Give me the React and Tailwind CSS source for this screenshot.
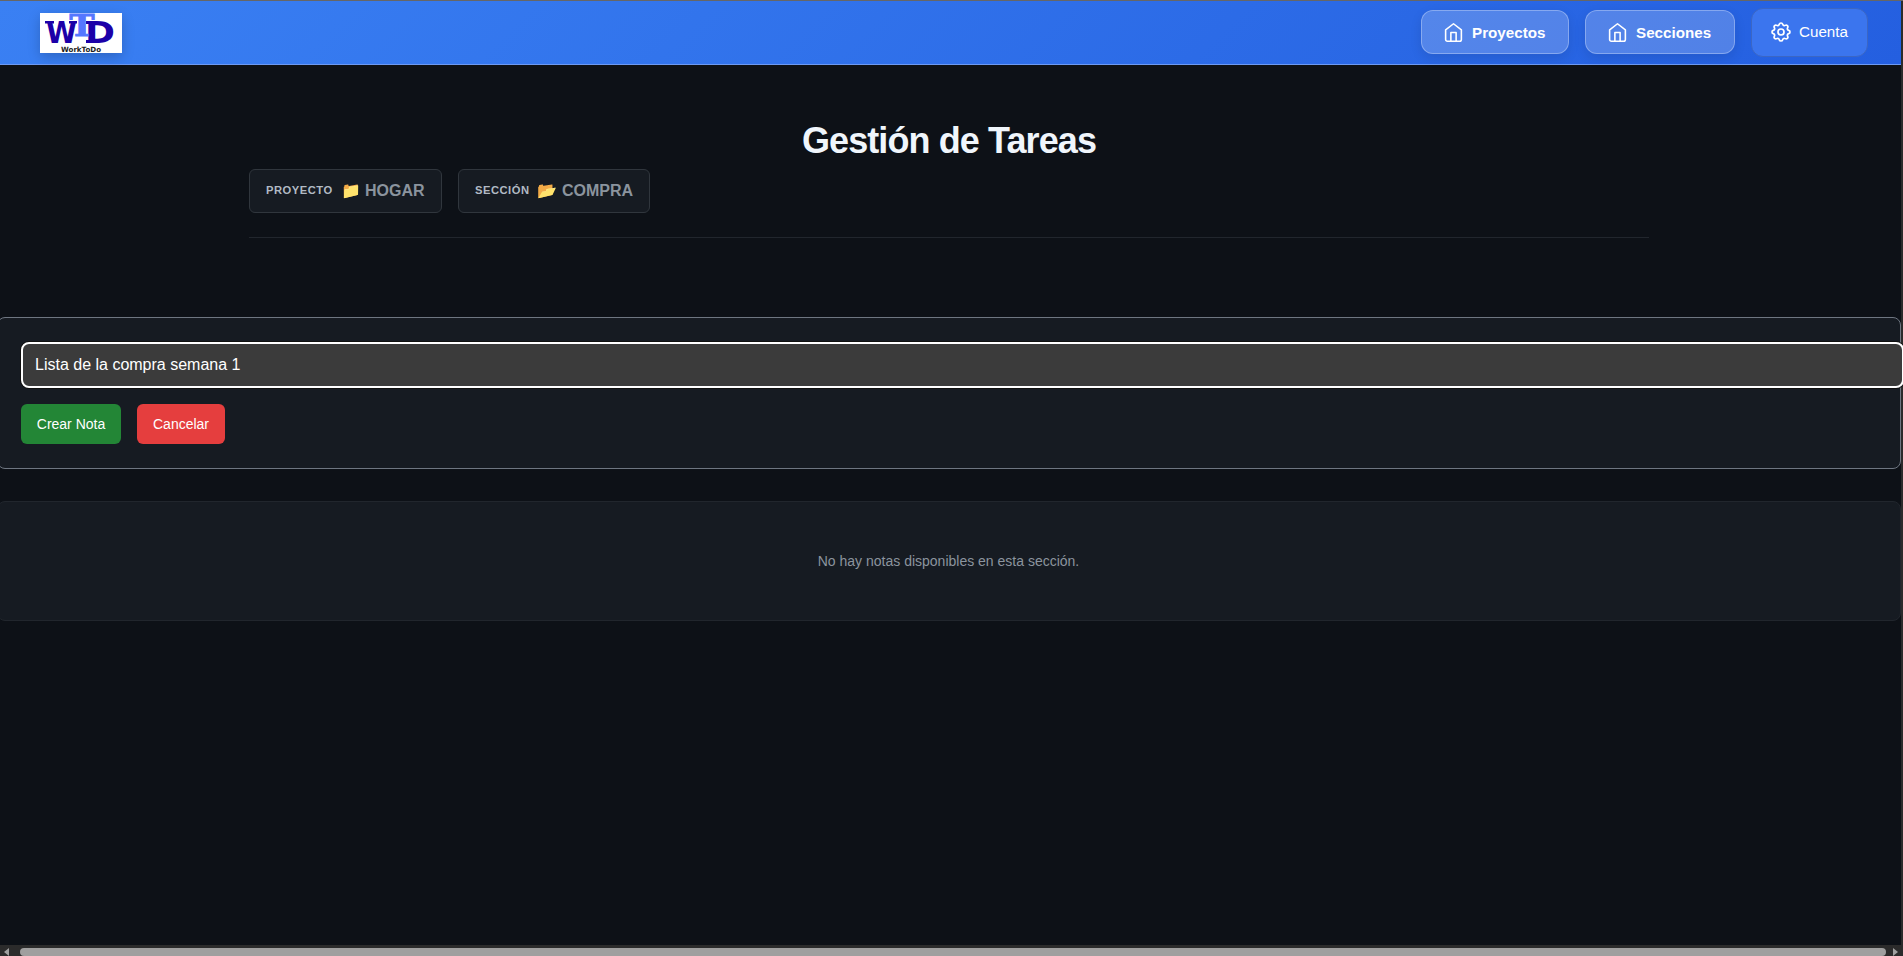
import React from "react";
import { HiOutlineCog } from "react-icons/hi";

function HomeIcon() {
  return (
    <svg className="h-[21px] w-[21px]" viewBox="0 0 24 24" fill="none" stroke="currentColor" strokeWidth="1.8" strokeLinecap="round" strokeLinejoin="round">
      <path d="M3 9l9-7 9 7v11a2 2 0 0 1-2 2H5a2 2 0 0 1-2-2z" />
      <polyline points="9 22 9 12 15 12 15 22" />
    </svg>
  );
}

function Logo() {
  return (
    <svg className="h-10 w-[82px] shadow-[0_4px_12px_rgba(0,0,0,0.2)]" viewBox="0 0 82 40">
      <rect width="82" height="40" fill="#fff" />
      <g fontFamily="'DejaVu Sans'" fontWeight="bold" fill="#1c00a8">
        <text x="6" y="30" fontSize="30" textLength="31" lengthAdjust="spacingAndGlyphs">W</text>
        <text x="45" y="30" fontSize="30" textLength="30" lengthAdjust="spacingAndGlyphs">D</text>
        <path d="M5 8h9v2.5H5zM29 8h8v2.5h-8zM46 8h6v3h-6zM46 27h6v3h-6z" />
      </g>
      <text x="29.5" y="22.5" fontFamily="'DejaVu Serif'" fontWeight="bold" fontSize="29" fill="#5577ff" stroke="#5577ff" strokeWidth="0.9" textLength="25" lengthAdjust="spacingAndGlyphs">T</text>
      <text x="21" y="38.5" fontFamily="'DejaVu Sans'" fontWeight="bold" fontSize="7.2" fill="#222" textLength="40" lengthAdjust="spacingAndGlyphs">WorkToDo</text>
    </svg>
  );
}

function NavButton({ label, className }) {
  return (
    <button className={`flex h-11 items-center gap-2 rounded-xl border border-white/30 bg-white/20 pl-[21px] text-[15.2px] font-bold text-white shadow-[0_4px_12px_rgba(0,0,0,0.1)] ${className}`}>
      <HomeIcon />
      <span className="pt-0.5">{label}</span>
    </button>
  );
}

function Crumb({ label, icon, name, className }) {
  return (
    <div className={`flex h-11 items-center rounded-md border border-[#30363d] bg-[#161b22] pl-4 ${className}`}>
      <span className="mr-2 pb-px text-[11.2px] font-bold tracking-[0.5px] text-[#b1bac4]">{label}</span>
      <span className="whitespace-pre text-base font-bold text-[#8b949e]">{icon} {name}</span>
    </div>
  );
}

export default function App() {
  return (
    <div className="flex h-[956px] w-[1903px] flex-col overflow-hidden border-t border-[#666] bg-[#0d1117] font-['Liberation_Sans',sans-serif]">
      <div className="flex h-[944px]">
        <div className="flex w-[1901px] shrink-0 flex-col">
          <header className="flex h-16 shrink-0 items-center border-b border-[#6d9af3] bg-[linear-gradient(135deg,#3a80f3_0%,#245fe0_100%)] pl-10">
            <Logo />
            <div className="mb-px ml-auto mr-[33px] flex items-center gap-4">
              <NavButton label="Proyectos" className="w-[148px]" />
              <NavButton label="Secciones" className="w-[150px]" />
              <button className="flex h-[49px] w-[117px] items-center gap-1.5 rounded-xl border border-[#3b66c4] bg-[#3b75ee] pl-[17px] text-[15.2px] text-white">
                <HiOutlineCog className="h-6 w-6 [&_path]:stroke-[1.7]" />
                <span>Cuenta</span>
              </button>
            </div>
          </header>
          <section className="ml-[249px] mt-[52px] flex h-[121px] w-[1400px] flex-col border-b border-[#21262d]">
            <h1 className="h-[52px] text-center text-[36px] font-bold leading-[47px] tracking-[-0.9px] text-[#f0f6fc]">Gestión de Tareas</h1>
            <div className="flex gap-4">
              <Crumb label="PROYECTO" icon="📁" name="HOGAR" className="w-[193px]" />
              <Crumb label="SECCIÓN" icon="📂" name="COMPRA" className="w-[192px]" />
            </div>
          </section>
          <section className="-ml-[3px] mt-[79px] h-[152px] w-[1904px] rounded-lg border border-[#6e7681] bg-[#161b22] pl-[23px] pt-6">
            <div className="relative z-10 flex h-[46px] w-[1883px] items-center rounded-lg border-2 border-white bg-[#3b3b3b] pl-3 text-base text-white shadow-[0_0_0_1px_#101010]">
              Lista de la compra semana 1
            </div>
            <div className="mt-4 flex gap-4 text-sm text-white">
              <button className="h-10 w-[100px] rounded-md bg-[#238636]">Crear Nota</button>
              <button className="h-10 w-[88px] rounded-md bg-[#e53e3e]">Cancelar</button>
            </div>
          </section>
          <section className="-ml-[3px] mt-8 flex h-[120px] w-[1904px] items-center justify-center rounded-lg border border-[#21262d] bg-[#161b22] pr-px text-sm text-[#8b949e]">
            No hay notas disponibles en esta sección.
          </section>
        </div>
        <div className="w-0.5 shrink-0 bg-[#2b2b2b]" />
      </div>
      <div className="flex h-[11px] items-start bg-[#2b2b2b] pt-[3px] text-[#a0a0a0]">
        <svg className="ml-1 h-2 w-[5px]" viewBox="0 0 5 8"><path d="M5 0v8L0 4z" fill="currentColor" /></svg>
        <div className="ml-[11px] h-2 w-[1866px] rounded-[4px] bg-[#9f9f9f]" />
        <svg className="ml-[7px] h-2 w-[5px]" viewBox="0 0 5 8"><path d="M0 0v8l5-4z" fill="currentColor" /></svg>
      </div>
    </div>
  );
}
